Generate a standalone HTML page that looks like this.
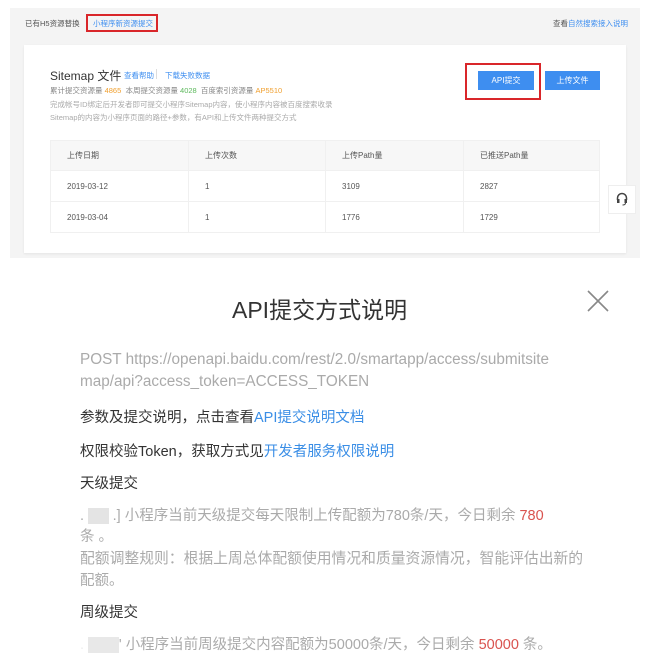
<!DOCTYPE html>
<html><head><meta charset="utf-8"><style>
*{margin:0;padding:0;box-sizing:border-box}
body{width:650px;height:670px;background:#fff;font-family:"Liberation Sans","Noto Sans CJK SC",sans-serif;position:relative;overflow:hidden}
.a{position:absolute;white-space:nowrap}
.bg{position:absolute;left:10px;top:8px;width:630px;height:250px;background:#f4f4f4}
.card{position:absolute;left:24px;top:45px;width:602px;height:208px;background:#fff;box-shadow:0 1px 2px #e4e4e4}
.s{font-size:7.5px;color:#555}
.b{color:#3f8ff0}
.t{position:absolute;left:50px;top:140px;width:550px;border-collapse:collapse;font-size:8px;color:#555}
.t td{border:1px solid #f0f0f0;padding-left:16px;height:31px}
.t tr:first-child td{background:#f7f7f7;height:30px}
.m{font-size:14.5px;color:#333;position:absolute;left:80px;white-space:nowrap}
.g{color:#aaa}
.r{color:#d9534f}
.l{color:#3a8ee6}
</style></head><body>
<div class="bg"></div>
<div class="a s" style="left:25px;top:18px">已有H5资源替换</div>
<div class="a" style="left:86px;top:14px;width:72px;height:18px;border:2px solid #d9262a"></div>
<div class="a s b" style="left:93px;top:18px">小程序新资源提交</div>
<div class="a s" style="left:553px;top:18px">查看<span class="b">自然搜索接入说明</span></div>
<div class="card"></div>
<div class="a" style="left:50px;top:67px;font-size:12px;color:#333">Sitemap 文件</div>
<div class="a s b" style="left:124px;top:70px">查看帮助</div>
<div class="a" style="left:156px;top:69px;width:1px;height:10px;background:#ddd"></div>
<div class="a s b" style="left:165px;top:70px">下载失败数据</div>
<div class="a s" style="left:50px;top:85px;color:#888">累计提交资源量 <span style="color:#f0a030">4865</span> &nbsp;本周提交资源量 <span style="color:#5cb85c">4028</span> &nbsp;百度索引资源量 <span style="color:#f0a030">AP5510</span></div>
<div class="a s" style="left:50px;top:99px;color:#aaa">完成帐号ID绑定后开发者即可提交小程序Sitemap内容，使小程序内容被百度搜索收录</div>
<div class="a s" style="left:50px;top:112px;color:#aaa">Sitemap的内容为小程序页面的路径+参数，有API和上传文件两种提交方式</div>
<div class="a" style="left:465px;top:63px;width:76px;height:37px;border:2px solid #d9262a"></div>
<div class="a" style="left:478px;top:71px;width:56px;height:19px;background:#3e8ef0;color:#fff;font-size:8px;text-align:center;line-height:19px">API提交</div>
<div class="a" style="left:545px;top:71px;width:55px;height:19px;background:#3e8ef0;color:#fff;font-size:8px;text-align:center;line-height:19px">上传文件</div>
<table class="t">
<tr><td style="width:138px">上传日期</td><td style="width:137px">上传次数</td><td style="width:138px">上传Path量</td><td>已推送Path量</td></tr>
<tr><td>2019-03-12</td><td>1</td><td>3109</td><td>2827</td></tr>
<tr><td>2019-03-04</td><td>1</td><td>1776</td><td>1729</td></tr>
</table>
<div class="a" style="left:608px;top:185px;width:28px;height:29px;background:#fff;border:1px solid #eee"></div>
<svg class="a" style="left:614px;top:191px" width="16" height="16" viewBox="0 0 16 16"><path d="M3.5 9V7a4.5 4.5 0 0 1 9 0v2" fill="none" stroke="#444" stroke-width="1.5"/><rect x="3" y="8" width="2.5" height="4" fill="#444"/><rect x="10.5" y="8" width="2.5" height="4" fill="#444"/><path d="M11.5 12q0 2-3 2" fill="none" stroke="#444" stroke-width="1"/></svg>
<div class="a" style="left:232px;top:291px;font-size:23px;color:#333">API提交方式说明</div>
<svg class="a" style="left:587px;top:290px" width="22" height="22" viewBox="0 0 22 22"><path d="M1 1L21 21M21 1L1 21" stroke="#888" stroke-width="1.6"/></svg>
<div class="m g" style="top:351px;font-size:15.3px">POST https://openapi.baidu.com/rest/2.0/smartapp/access/submitsite</div>
<div class="m g" style="top:373px;font-size:15.3px">map/api?access_token=ACCESS_TOKEN</div>
<div class="m" style="top:406px">参数及提交说明，点击查看<span class="l">API提交说明文档</span></div>
<div class="m" style="top:440px">权限校验Token，获取方式见<span class="l">开发者服务权限说明</span></div>
<div class="m" style="top:472px">天级提交</div>
<div class="m g" style="top:504px">. <span style="background:#e4e4e4;color:#e4e4e4">▒▒</span> .] 小程序当前天级提交每天限制上传配额为780条/天，今日剩余 <span class="r">780</span></div>
<div class="m g" style="top:525px">条 。</div>
<div class="m g" style="top:547px;font-size:14.8px">配额调整规则：根据上周总体配额使用情况和质量资源情况，智能评估出新的</div>
<div class="m g" style="top:569px">配额。</div>
<div class="m" style="top:601px">周级提交</div>
<div class="m g" style="top:633px"><span style="color:#eee">.</span> <span style="background:#e8e8e8;color:#e8e8e8">▒▒▒</span>' 小程序当前周级提交内容配额为50000条/天，今日剩余 <span class="r">50000</span> 条。</div>
</body></html>
